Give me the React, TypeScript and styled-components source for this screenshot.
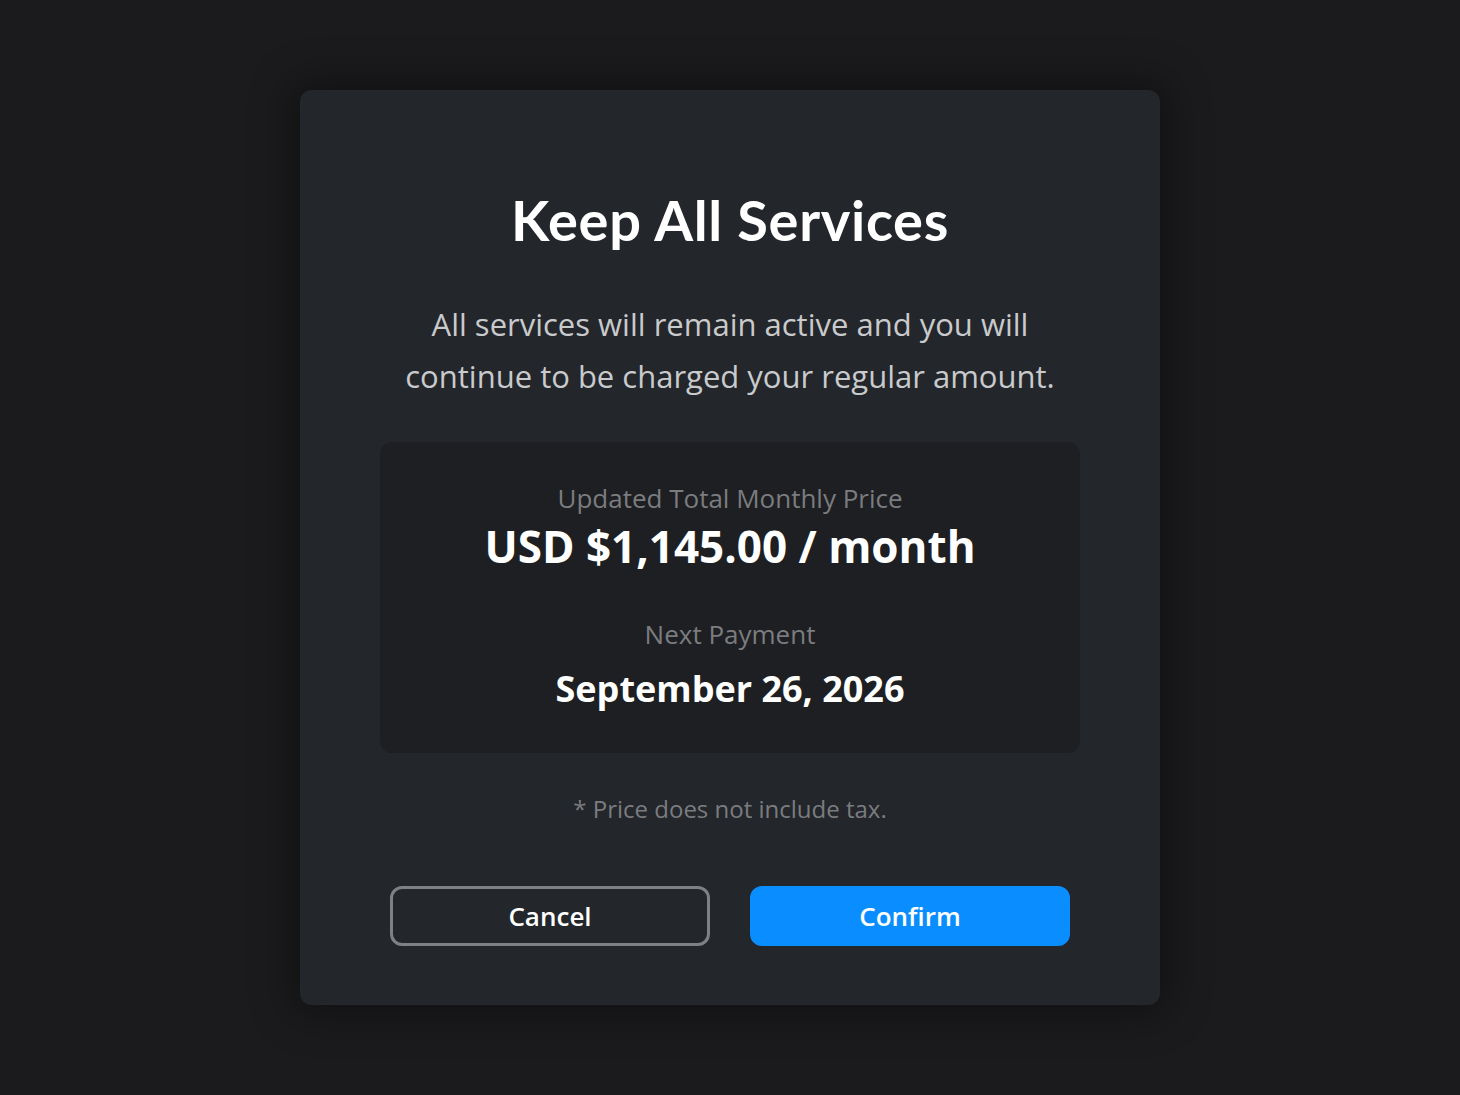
import React from "react";
import styled, { createGlobalStyle } from "styled-components";

const Global = createGlobalStyle`
  html, body { margin: 0; padding: 0; background: #1b1b1d; }
  body { font-family: "Open Sans", "Noto Sans", sans-serif; -webkit-font-smoothing: antialiased; }
`;

const Page = styled.div`
  min-height: 1095px;
  display: flex;
  justify-content: center;
  padding-top: 90px;
  box-sizing: border-box;
`;

const Modal = styled.div`
  width: 860px;
  height: 915px;
  box-sizing: border-box;
  background: #23262b;
  border-radius: 12px;
  box-shadow: 0 0 40px 10px rgba(0, 0, 0, 0.35);
  display: flex;
  flex-direction: column;
  align-items: center;
  padding: 0 80px;
`;

const Title = styled.h1`
  margin: 97px 0 0;
  font-family: Lato, "Open Sans", sans-serif;
  font-weight: 700;
  font-size: 56px;
  letter-spacing: 0.7px;
  line-height: 66px;
  color: #ffffff;
`;

const Lead = styled.p`
  margin: 45px 0 0;
  text-align: center;
  font-size: 31px;
  line-height: 52px;
  color: #c9cacc;
  max-width: 700px;
`;

const Summary = styled.div`
  margin-top: 40px;
  width: 700px;
  height: 311px;
  flex-shrink: 0;
  box-sizing: border-box;
  background: #1e1f22;
  border-radius: 12px;
  display: flex;
  flex-direction: column;
  align-items: center;
  padding-top: 36px;
`;

const Label = styled.div<{ $gap?: number }>`
  margin-top: ${(p) => p.$gap ?? 0}px;
  font-size: 26px;
  line-height: 40px;
  color: #7b7c7f;
`;

const Amount = styled.div`
  font-size: 44px;
  font-weight: 700;
  line-height: 56px;
  color: #ffffff;
`;

const DateText = styled.div`
  margin-top: 11px;
  font-size: 36px;
  font-weight: 700;
  line-height: 48px;
  color: #ffffff;
`;

const Note = styled.p`
  margin: 36px 0 0;
  font-size: 24px;
  line-height: 40px;
  color: #7b7c7f;
`;

const Actions = styled.div`
  margin-top: 57px;
  display: flex;
  gap: 40px;
`;

const Button = styled.button<{ $primary?: boolean }>`
  width: 320px;
  height: 60px;
  box-sizing: border-box;
  border-radius: 12px;
  font-family: "Open Sans", sans-serif;
  font-weight: 600;
  font-size: 26px;
  color: #ffffff;
  cursor: pointer;
  background: ${(p) => (p.$primary ? "#0a8eff" : "transparent")};
  border: ${(p) => (p.$primary ? "3px solid #0a8eff" : "3px solid #7e8083")};
`;

export default function App() {
  return (
    <>
      <Global />
      <Page>
        <Modal>
          <Title>Keep All Services</Title>
          <Lead>
            All services will remain active and you will continue to be charged your regular amount.
          </Lead>
          <Summary>
            <Label>Updated Total Monthly Price</Label>
            <Amount>USD $1,145.00 / month</Amount>
            <Label $gap={40}>Next Payment</Label>
            <DateText>September 26, 2026</DateText>
          </Summary>
          <Note>* Price does not include tax.</Note>
          <Actions>
            <Button>Cancel</Button>
            <Button $primary>Confirm</Button>
          </Actions>
        </Modal>
      </Page>
    </>
  );
}
